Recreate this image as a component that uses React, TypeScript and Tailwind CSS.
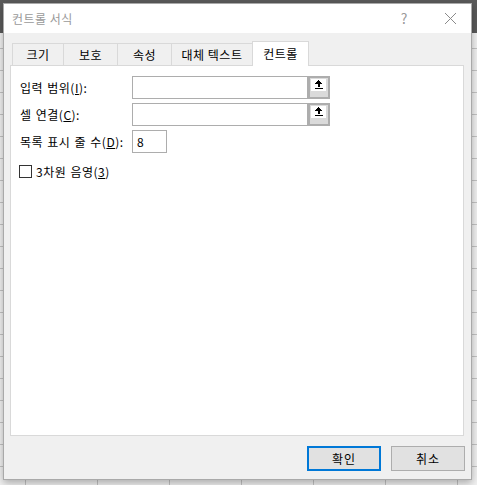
import React from "react";

const font = { fontFamily: '"Noto Sans CJK KR", "Noto Sans", sans-serif' };

function RefIcon() {
  return (
    <svg width="15" height="12" viewBox="0 0 15 12" shapeRendering="crispEdges">
      <polygon points="7.5,1 11,5 4,5" fill="#000" />
      <rect x="6.5" y="5" width="2" height="3" fill="#000" />
      <rect x="3.5" y="9" width="8" height="1" fill="#000" />
    </svg>
  );
}

function RefButton() {
  return (
    <div className="w-[22px] h-[23px] border-2 border-[#adadad] bg-[#dadada] pl-px pt-px">
      <div className="w-[15px] h-[12px] bg-white">
        <RefIcon />
      </div>
    </div>
  );
}

function Tab({ label, w, active }: { label: string; w: string; active?: boolean }) {
  if (active) {
    return (
      <div
        className={`${w} h-[25px] -mb-px relative z-10 bg-white border-t border-l border-r border-[#d9d9d9] flex items-center justify-center text-[12px] text-black`}
      >
        {label}
      </div>
    );
  }
  return (
    <div
      className={`${w} h-[22px] bg-[#f0f0f0] border-t border-l border-[#d9d9d9] flex items-center justify-center text-[12px] text-black`}
    >
      {label}
    </div>
  );
}

export default function App() {
  return (
    <div className="relative w-[477px] h-[485px] overflow-hidden flex flex-col tracking-[0.5px]" style={font}>
      <div className="h-[33px] bg-[#5a5a5a]" />
      <div className="flex-1 bg-[#f2f2f2] [background-image:linear-gradient(to_right,#c4c4c4_1px,transparent_1px),linear-gradient(to_bottom,#c4c4c4_1px,transparent_1px)] [background-size:72px_22px] [background-position:25px_-29px]" />

      {/* dialog window */}
      <div className="absolute left-[3px] top-[3px] w-[469px] h-[477px] border border-[#a9a9a9] bg-[#f0f0f0] flex flex-col shadow-[0_3px_8px_rgba(0,0,0,0.3)]">
        <div className="h-[29px] bg-white flex items-center pl-[8px] pr-[14px] shrink-0">
          <span className="text-[12px] text-[#9a9a9a] flex-1">컨트롤 서식</span>
          <span className="text-[14px] text-[#9a9a9a] mr-[36px]">?</span>
          <svg width="13" height="13" viewBox="0 0 13 13">
            <path d="M1 1L12 12M12 1L1 12" stroke="#8a8a8a" strokeWidth="1" />
          </svg>
        </div>

        <div className="flex flex-col pt-[8px] pl-[6px] pr-[7px]">
          <div className="flex items-end h-[24px] ml-[2px]">
            <Tab label="크기" w="w-[51px]" />
            <Tab label="보호" w="w-[54px]" />
            <Tab label="속성" w="w-[54px]" />
            <Tab label="대체 텍스트" w="w-[81px]" />
            <Tab label="컨트롤" w="w-[57px]" active />
          </div>

          <div className="h-[371px] bg-white border border-[#d9d9d9] pt-[10px] pl-[9px] flex flex-col gap-[4px] text-[12px] text-black">
            <div className="flex items-center h-[23px]">
              <span className="w-[112px] [word-spacing:1px]">
                입력 범위(<u>I</u>):
              </span>
              <div className="w-[176px] h-[23px] border border-[#adadad] bg-white" />
              <RefButton />
            </div>
            <div className="flex items-center h-[23px]">
              <span className="w-[112px] [word-spacing:1px]">
                셀 연결(<u>C</u>):
              </span>
              <div className="w-[176px] h-[23px] border border-[#adadad] bg-white" />
              <RefButton />
            </div>
            <div className="flex items-center h-[23px]">
              <span className="w-[112px] [word-spacing:1px]">
                목록 표시 줄 수(<u>D</u>):
              </span>
              <div className="w-[35px] h-[23px] border border-[#adadad] bg-white flex items-center pl-[4px]">
                8
              </div>
            </div>
            <div className="flex items-center h-[13px] mt-[8px] -ml-px gap-[4px]">
              <div className="w-[13px] h-[13px] border border-[#333333] bg-white" />
              <span className="[word-spacing:1px]">
                3차원 음영(<u>3</u>)
              </span>
            </div>
          </div>

          <div className="flex justify-end gap-[10px] mt-[10px] -mr-px">
            <button className="w-[74px] h-[25px] border-2 border-[#0078d7] bg-[#e1e1e1] text-[12px] text-black tracking-[1px]">
              확인
            </button>
            <button className="w-[74px] h-[25px] border border-[#adadad] bg-[#e1e1e1] text-[12px] text-black tracking-[1px]">
              취소
            </button>
          </div>
        </div>
      </div>
    </div>
  );
}
